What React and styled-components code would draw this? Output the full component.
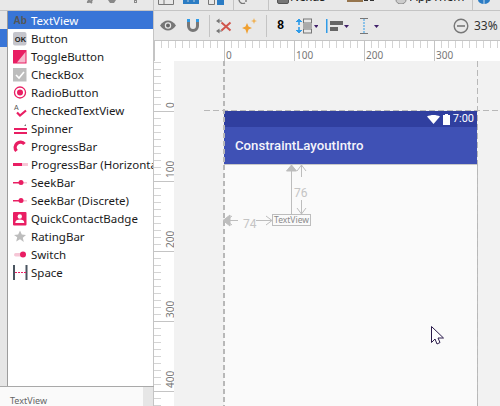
import styled, { createGlobalStyle } from "styled-components";

const GlobalStyle = createGlobalStyle`
  html, body {
    margin: 0;
    padding: 0;
    background: #e8e8e8;
    overflow: hidden;
  }
`;

const Page = styled.div`
  width: 500px;
  height: 406px;
  display: grid;
  grid-template-columns: 154px 1fr;
  grid-template-rows: 11px 1fr;
  font-family: "Noto Sans", "Open Sans", sans-serif;
  overflow: hidden;
`;

const TopBar = styled.div`
  grid-column: 1 / 3;
  display: flex;
  align-items: flex-start;
  height: 11px;
  box-sizing: border-box;
  background: #e8e8e8;
  border-bottom: 1px solid #c4c4c4;
  overflow: hidden;
`;

const TopIcon = styled.svg`
  flex: none;
  margin-left: ${(p) => p.$gap}px;
`;

const TopDivider = styled.div`
  flex: none;
  width: 1px;
  height: 10px;
  background: #c4c4c4;
  margin-left: ${(p) => p.$gap}px;
`;

const TopLabel = styled.span`
  flex: none;
  width: ${(p) => p.$width}px;
  margin-left: ${(p) => p.$gap}px;
  margin-top: -9px;
  font-size: 12px;
  line-height: 12px;
  color: #222;
  white-space: nowrap;
  overflow: hidden;
`;

const Palette = styled.div`
  display: flex;
  flex-direction: column;
  min-height: 0;
`;

const PaletteMain = styled.div`
  flex: 1;
  display: grid;
  grid-template-columns: 7px 1fr;
  min-height: 0;
  border-bottom: 1px solid #a9a9a9;
`;

const Categories = styled.div`
  background: #e6e6e6;
  padding-top: 18px;
`;

const CategoryMark = styled.div`
  height: 18px;
  background: #3875d7;
`;

const List = styled.div`
  background: #fff;
  border-left: 1px solid #9c9c9c;
  border-right: 1px solid #c4c4c4;
  min-width: 0;
  overflow: hidden;
`;

const Row = styled.div`
  height: 18px;
  display: flex;
  align-items: center;
  padding-left: 5px;
  gap: 3px;
  font-size: 11.5px;
  white-space: nowrap;
  color: ${(p) => (p.$selected ? "#ffffff" : "#1b1b1b")};
  background: ${(p) => (p.$selected ? "#3875d7" : "transparent")};
`;

const RowIcon = styled.svg`
  width: 15px;
  height: 15px;
  flex: none;
`;

const Preview = styled.div`
  height: 19px;
  background: #fafafa;
  display: grid;
  grid-template-columns: 1fr 10px;
  border-right: 1px solid #c4c4c4;
`;

const PreviewTitle = styled.div`
  padding: 7px 0 0 10px;
  font-size: 9px;
  line-height: 13px;
  color: #666;
`;

const PreviewScroll = styled.div`
  background: #e6e6e6;
`;

const Designer = styled.div`
  display: grid;
  grid-template-rows: 30px 20px 1fr;
  min-height: 0;
`;

const Toolbar = styled.div`
  display: flex;
  align-items: center;
  padding-left: 6px;
  background: #e8e8e8;
  border-bottom: 1px solid #c4c4c4;
`;

const ToolIcon = styled.svg`
  flex: none;
  margin-left: ${(p) => p.$gap || 0}px;
`;

const ToolDivider = styled.div`
  width: 1px;
  height: 22px;
  flex: none;
  background: #c4c4c4;
  margin-left: ${(p) => p.$gap}px;
`;

const GridNumber = styled.span`
  width: 7px;
  margin-left: 10px;
  font: bold 12px "Liberation Mono", monospace;
  color: #000;
`;

const Zoom = styled.span`
  margin-left: 5px;
  font-size: 12px;
  color: #333;
`;

const TopRuler = styled.div`
  position: relative;
  background: #fff;
  overflow: hidden;
`;

const TickH = styled.i`
  position: absolute;
  top: 0;
  height: ${(p) => (p.$major ? "20px" : "7px")};
  width: 1px;
  background: ${(p) => (p.$major ? "#c4c4c4" : "#d4d4d4")};
`;

const RulerLabel = styled.span`
  position: absolute;
  font-size: 10px;
  line-height: 10px;
  color: #777;
`;

const Stage = styled.div`
  display: grid;
  grid-template-columns: 20px 1fr;
  min-height: 0;
`;

const SideRuler = styled.div`
  position: relative;
  background: #fff;
  overflow: hidden;
`;

const TickV = styled.i`
  position: absolute;
  left: 0;
  height: 1px;
  width: ${(p) => (p.$major ? "20px" : "7px")};
  background: ${(p) => (p.$major ? "#c4c4c4" : "#d4d4d4")};
`;

const SideLabel = styled(RulerLabel)`
  left: 11px;
  writing-mode: vertical-rl;
  transform: translateY(-100%) rotate(180deg);
`;

const Canvas = styled.div`
  position: relative;
  background: #f2f2f2;
  overflow: hidden;
`;

const Phone = styled.div`
  position: absolute;
  left: 50px;
  top: 50px;
  width: 254px;
  height: 300px;
  display: flex;
  flex-direction: column;
`;

const StatusBar = styled.div`
  height: 16px;
  flex: none;
  margin-right: 1px;
  background: #303f9f;
  color: #fff;
  display: flex;
  align-items: center;
  justify-content: flex-end;
  gap: 3px;
  padding-right: 3px;
  font: 11px/16px Roboto, sans-serif;
`;

const AppBar = styled.div`
  height: 37px;
  flex: none;
  margin-right: 1px;
  box-sizing: border-box;
  background: #3f51b5;
  color: #f4f4fb;
  padding: 11px 0 0 11px;
  font: 500 13.2px/16px Roboto, sans-serif;
`;

const PhoneBody = styled.div`
  flex: 1;
  background: #fafafa;
  border-top: 1px solid #c8c8c8;
  border-right: 1px solid #bdbdbd;
`;

const GuideH = styled.div`
  position: absolute;
  left: 30px;
  right: 0;
  top: 49px;
  height: 1px;
  background: repeating-linear-gradient(90deg, #b8b8b8 0 6px, transparent 6px 9px);
`;

const GuideV = styled.div`
  position: absolute;
  left: ${(p) => p.$left}px;
  top: 0;
  bottom: 0;
  width: ${(p) => p.$width}px;
  background: repeating-linear-gradient(
    180deg,
    #b8b8b8 0 ${(p) => p.$dash}px,
    transparent ${(p) => p.$dash}px ${(p) => p.$dash + 3}px
  );
`;

const WidgetBox = styled.div`
  position: absolute;
  left: 98px;
  top: 153px;
  width: 39px;
  height: 12px;
  box-sizing: border-box;
  border: 1px solid #bdbdbd;
  background: #fafafa;
  color: #8a8a8a;
  font-size: 8.5px;
  line-height: 10px;
  text-align: center;
  white-space: nowrap;
  overflow: hidden;
`;

const ConstraintLabel = styled.span`
  position: absolute;
  left: ${(p) => p.$left}px;
  top: ${(p) => p.$top}px;
  font: 12px/12px Roboto, sans-serif;
  color: #c4c4c4;
`;

const Overlay = styled.svg`
  position: absolute;
  left: 0;
  top: 0;
`;

const Cursor = styled.svg`
  position: absolute;
  left: 257px;
  top: 265px;
`;

const PINK = "#e91e63";
const PALE = "#f6c6d6";

const widgets = [
  {
    name: "TextView",
    selected: true,
    icon: <text x="0.5" y="11" fontSize="10" fontWeight="700" fontFamily="Liberation Sans" fill="#555">Ab</text>,
  },
  {
    name: "Button",
    icon: (
      <>
        <rect x="0" y="1" width="13.5" height="13.5" rx="2" fill="#c5c5cc" />
        <text x="1.8" y="10.5" fontSize="7.5" fontWeight="700" fontFamily="Liberation Sans" fill="#222">OK</text>
      </>
    ),
  },
  {
    name: "ToggleButton",
    icon: (
      <>
        <rect x="0" y="1" width="13.5" height="13.5" fill={PINK} />
        <path d="M12.5 3v10.5H4z" fill="#f6b9cd" />
      </>
    ),
  },
  {
    name: "CheckBox",
    icon: (
      <>
        <rect x="0" y="1" width="13.5" height="13.5" fill="#bdbdbd" />
        <path d="M3 8l3 3 5-6" stroke="#fff" strokeWidth="1.6" fill="none" />
      </>
    ),
  },
  {
    name: "RadioButton",
    icon: (
      <>
        <circle cx="7" cy="7.5" r="5.5" fill="none" stroke={PINK} strokeWidth="1.3" />
        <circle cx="7" cy="7.5" r="3" fill={PINK} />
      </>
    ),
  },
  {
    name: "CheckedTextView",
    icon: (
      <>
        <text x="1" y="6.5" fontSize="7" fontFamily="Liberation Sans" fill="#555">A</text>
        <path d="M4 9.5l3 3 6-5" stroke={PINK} strokeWidth="2.2" fill="none" />
      </>
    ),
  },
  {
    name: "Spinner",
    icon: (
      <>
        <path d="M1 5h10l2-2v2z" fill="#777" />
        <rect x="1" y="7" width="13" height="2" fill={PINK} />
        <rect x="1" y="11" width="13" height="2" fill={PINK} />
      </>
    ),
  },
  {
    name: "ProgressBar",
    icon: <path d="M3.5 12a5 5 0 1 1 8-7" stroke={PINK} strokeWidth="3.4" fill="none" />,
  },
  {
    name: "ProgressBar (Horizontal)",
    icon: (
      <>
        <rect x="0" y="6" width="9" height="3" fill={PINK} />
        <rect x="9" y="6" width="6" height="3" fill={PALE} />
      </>
    ),
  },
  {
    name: "SeekBar",
    icon: (
      <>
        <rect x="0" y="7" width="10" height="1.5" fill={PINK} />
        <rect x="10" y="7" width="4" height="1.5" fill={PALE} />
        <circle cx="8" cy="7.5" r="2.5" fill={PINK} />
      </>
    ),
  },
  {
    name: "SeekBar (Discrete)",
    icon: (
      <>
        <rect x="0" y="7" width="10" height="1.5" fill={PINK} />
        <rect x="10" y="7" width="4" height="1.5" fill={PALE} />
        <circle cx="8" cy="7.5" r="2.5" fill={PINK} />
      </>
    ),
  },
  {
    name: "QuickContactBadge",
    icon: (
      <>
        <rect x="0" y="1" width="13.5" height="13.5" rx="1" fill={PINK} />
        <circle cx="6.8" cy="5.5" r="2.2" fill="#fff" />
        <path d="M2.3 12c0-2.5 2-3.4 4.5-3.4s4.5.9 4.5 3.4z" fill="#fff" />
      </>
    ),
  },
  {
    name: "RatingBar",
    icon: <path d="M7 1.5l1.8 4 4.2.4-3.2 2.8 1 4.3L7 10.3l-3.8 2.2 1-4.3L1 5.9l4.2-.4z" fill="#bdbdbd" />,
  },
  {
    name: "Switch",
    icon: (
      <>
        <rect x="1" y="6" width="11" height="3.5" rx="1.7" fill={PALE} />
        <circle cx="10" cy="7.5" r="3" fill={PINK} />
      </>
    ),
  },
  {
    name: "Space",
    icon: (
      <>
        <rect x="0" y="0" width="2" height="15" fill="#4a5560" />
        <rect x="12.5" y="0" width="2" height="15" fill="#4a5560" />
        <path d="M2 7.5h11" stroke={PINK} strokeDasharray="2 1" />
      </>
    ),
  },
];

const range = (n) => Array.from({ length: n }, (_, i) => i);

export default function App() {
  return (
    <Page>
      <GlobalStyle />
      <TopBar>
        <TopIcon $gap={85} width="13" height="5" viewBox="0 0 13 5">
          <path d="M3 0l4 3M7 0a4 2.5 0 0 1-5 2" stroke="#888" strokeWidth="2" fill="none" />
        </TopIcon>
        <TopIcon $gap={9} width="10" height="3" viewBox="0 0 10 3">
          <path d="M1 0h8l-2 3H3z" fill="#888" />
        </TopIcon>
        <TopIcon $gap={17} width="3" height="3" viewBox="0 0 3 3">
          <rect x="0.5" y="0" width="2" height="3" fill="none" stroke="#888" />
        </TopIcon>
        <TopDivider $gap={16} />
        <TopIcon $gap={4} width="16" height="5" viewBox="0 0 16 5">
          <path d="M.5 0v4.5h15V0M6 0v4" fill="none" stroke="#777" />
        </TopIcon>
        <TopIcon $gap={9} width="16" height="4" viewBox="0 0 16 4">
          <rect width="16" height="4" fill="#2b7cc4" />
          <path d="M5 0v2M11 0v2" stroke="#bcd" />
        </TopIcon>
        <TopIcon $gap={9} width="16" height="5" viewBox="0 0 16 5">
          <path d="M.5 0v4.5h6V0" fill="none" stroke="#777" />
          <rect x="9" width="7" height="5" fill="#2b7cc4" />
        </TopIcon>
        <TopDivider $gap={9} />
        <TopIcon $gap={4} width="9" height="4" viewBox="0 0 9 4">
          <path d="M1 0a4 4 0 0 0 6 3M8 0v2" stroke="#777" strokeWidth="1.4" fill="none" />
        </TopIcon>
        <TopDivider $gap={21} />
        <TopIcon $gap={8} width="12" height="4" viewBox="0 0 12 4">
          <path d="M.5 0v2A1.500 1.500 0 0 0 2 3.500h8A1.500 1.500 0 0 0 11.500 2V0" fill="#777" stroke="#555" />
        </TopIcon>
        <TopLabel $gap={1} $width={40}>Nexus 4</TopLabel>
        <TopIcon $gap={17} width="16" height="2" viewBox="0 0 16 2">
          <rect width="16" height="2" fill="#96754d" />
        </TopIcon>
        <TopIcon $gap={1} width="10" height="2" viewBox="0 0 10 2">
          <path d="M0 .5h4M6 .5h4" stroke="#333" />
        </TopIcon>
        <TopIcon $gap={21} width="12" height="4" viewBox="0 0 12 4">
          <path d="M1 0a5 4 0 0 0 10 0" fill="#ccc" stroke="#888" />
        </TopIcon>
        <TopLabel $gap={3} $width={55}>AppTheme</TopLabel>
        <TopDivider $gap={7} />
        <TopIcon $gap={5} width="12" height="4" viewBox="0 0 12 4">
          <path d="M0 0a6 4 0 0 0 12 0z" fill="#2b7cc4" />
          <path d="M6 0v4" stroke="#cde" />
        </TopIcon>
      </TopBar>
      <Palette>
        <PaletteMain>
          <Categories>
            <CategoryMark />
          </Categories>
          <List>
            {widgets.map((w) => (
              <Row key={w.name} $selected={w.selected}>
                <RowIcon viewBox="0 0 15 15">{w.icon}</RowIcon>
                <span>{w.name}</span>
              </Row>
            ))}
          </List>
        </PaletteMain>
        <Preview>
          <PreviewTitle>TextView</PreviewTitle>
          <PreviewScroll />
        </Preview>
      </Palette>
      <Designer>
        <Toolbar>
          <ToolIcon width="16" height="11" viewBox="0 0 16 11">
            <path d="M0 5.500C2.500 2 5 .5 8 .5s5.500 1.500 8 5c-2.500 3.500-5 5-8 5s-5.500-1.500-8-5z" fill="#777" />
            <circle cx="8" cy="5.500" r="3.200" fill="#e8e8e8" />
            <circle cx="8" cy="5.500" r="2" fill="#666" />
          </ToolIcon>
          <ToolIcon $gap={11} width="12" height="13" viewBox="0 0 12 13">
            <path d="M1.500 3v4a4.500 4.500 0 0 0 9 0V3" fill="none" stroke="#777" strokeWidth="3" />
            <rect x="0" y="0" width="3" height="3" fill="#2f9be8" />
            <rect x="9" y="0" width="3" height="3" fill="#2f9be8" />
          </ToolIcon>
          <ToolDivider $gap={10} />
          <ToolIcon $gap={6} width="16" height="16" viewBox="0 0 16 16">
            <path d="M2 3h4M2 13h4" stroke="#777" />
            <path d="M3.500 0.500L0 3l3.500 2.500zM3.500 10.500L0 13l3.500 2.500z" fill="#777" />
            <path d="M5.500 4.500l9 8M14.500 4.500l-9 8" stroke="#d0554c" strokeWidth="2" />
          </ToolIcon>
          <ToolIcon $gap={10} width="16" height="16" viewBox="0 0 16 16">
            <path d="M5 5l1.500 3.500L10 10l-3.500 1.500L5 16l-1.500-4.500L0 10l3.500-1.500z" fill="#f0a030" />
            <path d="M12 0l.8 2.200L15 3l-2.200.8L12 6l-.8-2.200L9 3l2.200-.8z" fill="#f0b050" />
          </ToolIcon>
          <ToolDivider $gap={8} />
          <GridNumber>8</GridNumber>
          <ToolIcon $gap={12} width="22" height="16" viewBox="0 0 22 16">
            <rect x="7.500" y="1" width="8" height="4" fill="none" stroke="#777" />
            <rect x="7.500" y="11" width="8" height="4" fill="none" stroke="#777" />
            <rect x="7" y="5.500" width="9" height="5" fill="#aaa" />
            <path d="M3 1v6M3 9v6" stroke="#2f9be8" strokeWidth="1.600" />
            <path d="M0 4l3-3 3 3M0 12l3 3 3-3" stroke="#2f9be8" fill="#2f9be8" />
            <path d="M18 7h4.500L20.200 10z" fill="#40206a" />
          </ToolIcon>
          <ToolIcon $gap={8} width="23" height="14" viewBox="0 0 23 14">
            <rect x="0" y="0" width="1.500" height="14" fill="#2f9be8" />
            <rect x="4" y="2" width="13" height="4" fill="#666" />
            <rect x="4" y="8" width="8" height="4" fill="#666" />
            <path d="M18 6h5l-2.500 3z" fill="#40206a" />
          </ToolIcon>
          <ToolIcon $gap={11} width="19" height="16" viewBox="0 0 19 16">
            <path d="M0 .5h8M0 15.500h8" stroke="#777" />
            <path d="M4 1v14" stroke="#2f9be8" strokeDasharray="2 1" />
            <path d="M14 7h5l-2.500 3z" fill="#40206a" />
          </ToolIcon>
          <ToolIcon $gap={74} width="16" height="16" viewBox="0 0 16 16">
            <circle cx="8" cy="8" r="6.800" fill="none" stroke="#777" strokeWidth="1.400" />
            <path d="M4 8h8" stroke="#777" strokeWidth="1.600" />
          </ToolIcon>
          <Zoom>33%</Zoom>
        </Toolbar>
        <TopRuler>
          {range(50).map((i) => (
            <TickH key={i} $major={i % 10 === 0} style={{ left: i * 7 }} />
          ))}
          {[0, 100, 200, 300].map((v, i) => (
            <RulerLabel key={v} style={{ left: 72 + i * 70, top: 9 }}>{v}</RulerLabel>
          ))}
        </TopRuler>
        <Stage>
          <SideRuler>
            {range(50).map((i) => (
              <TickV key={i} $major={(i - 7) % 10 === 0} style={{ top: i * 7 + 1 }} />
            ))}
            {[0, 100, 200, 300, 400].map((v, i) => (
              <SideLabel key={v} style={{ top: 47 + i * 70 }}>{v}</SideLabel>
            ))}
          </SideRuler>
          <Canvas>
            <Phone>
              <StatusBar>
                <svg width="13" height="9" viewBox="0 0 13 9">
                  <path d="M0 1.500c3.700-2 9.300-2 13 0L6.500 9z" fill="#fff" />
                </svg>
                <svg width="7" height="11" viewBox="0 0 7 11">
                  <path d="M2 0h3v1h2v10H0V1h2z" fill="#fff" />
                </svg>
                <span>7:00</span>
              </StatusBar>
              <AppBar>ConstraintLayoutIntro</AppBar>
              <PhoneBody />
            </Phone>
            <GuideH />
            <GuideV $left={49} $width={2} $dash={5} />
            <GuideV $left={303} $width={1} $dash={6} />
            <Overlay width="326" height="345">
              <g stroke="#bdbdbd" fill="none">
                <path d="M117.500 104v49" />
                <path d="M117.500 104l-5 6h10z" fill="#bdbdbd" />
                <path d="M127.500 104v12M127.500 139v14" />
                <path d="M123 110l4.500-6 4.500 6M123 147l4.500 6 4.500-6" />
                <path d="M49 159.500l7-5.500v11z" fill="#bdbdbd" />
                <path d="M53 159.500h11M82 159.500h16" />
                <path d="M58 155l-6 4.500 6 4.500M92 155l6 4.500-6 4.500" />
              </g>
            </Overlay>
            <ConstraintLabel $left={120} $top={126}>76</ConstraintLabel>
            <ConstraintLabel $left={69} $top={157}>74</ConstraintLabel>
            <WidgetBox>TextView</WidgetBox>
            <Cursor width="13" height="20" viewBox="0 0 13 20">
              <path d="M.5 .5v16l3.500-3.500 2 5 3-1.500-2-4.500h5.500z" fill="#fff" stroke="#2b1b4a" />
            </Cursor>
          </Canvas>
        </Stage>
      </Designer>
    </Page>
  );
}
